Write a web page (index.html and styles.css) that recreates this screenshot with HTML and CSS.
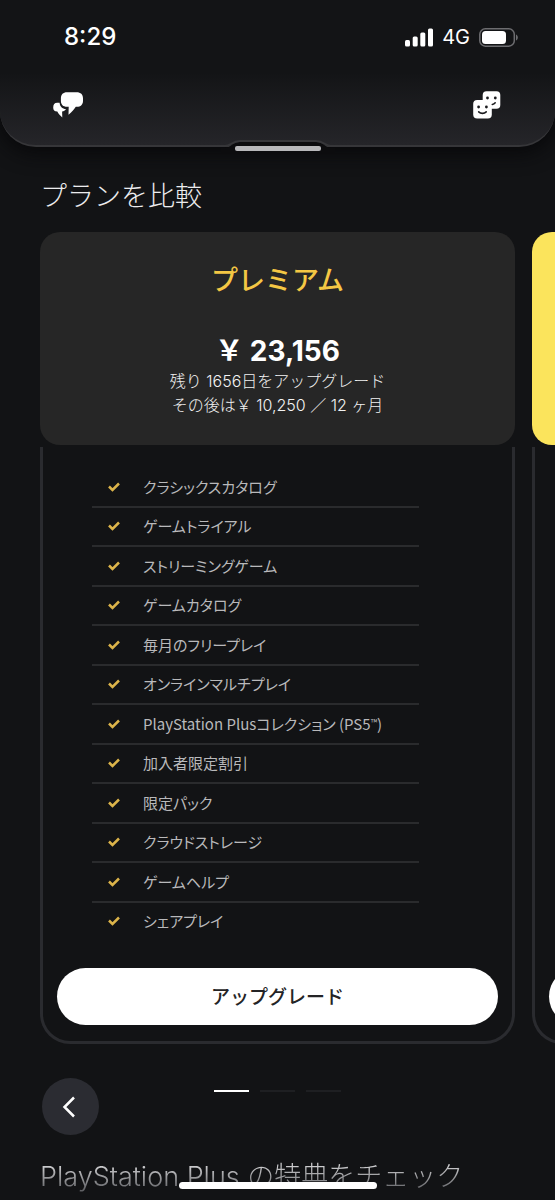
FILE: index.html
```html
<!DOCTYPE html>
<html lang="ja">
<head>
<meta charset="utf-8">
<meta name="viewport" content="width=device-width, initial-scale=1">
<title>PlayStation Plus</title>
<link rel="stylesheet" href="styles.css">
</head>
<body>
<div class="app">
  <header class="topbar">
    <div class="status">
      <time class="clock">8:29</time>
      <div class="status-right">
        <svg class="signal" width="28" height="19" viewBox="0 0 28 19" aria-hidden="true"><rect x="0" y="12" width="5" height="6.500" rx="1.500"/><rect x="7.700" y="8.500" width="5" height="10" rx="1.500"/><rect x="15.300" y="4.500" width="5" height="14" rx="1.500"/><rect x="23" y="0.500" width="5" height="18" rx="1.500"/></svg>
        <span class="network">4G</span>
        <svg width="39" height="19" viewBox="0 0 39 19" aria-hidden="true"><rect x="0.800" y="0.800" width="34.500" height="17.400" rx="5.500" fill="none" stroke="#6d6d70" stroke-width="1.500"/><rect x="3" y="3" width="24" height="13" rx="3.500" fill="#fff"/><path d="M37 6.500c2.400.8 2.400 5.200 0 6z" fill="#6d6d70"/></svg>
      </div>
    </div>
    <nav class="tools">
      <button class="icon-button" aria-label="メッセージ">
        <svg width="32" height="28" viewBox="0 0 32 28"><path fill="#fff" d="M16 1.200h9.500c4.300 0 6.500 2.200 6.500 6v2.500c0 3.900-2.200 6-6.200 6.100h-1c-1.800 2.800-4 5.200-7.300 7.900l.2-7.900h-1.700c-4 0-6.100-2.100-6.100-6V7.200c0-3.800 2.200-6 6.100-6z"/><path fill="#fff" d="M6.200 11.800h2.400c.2 3.600 2.600 6 6.500 6.400-1 1.300-2.400 2-4 2.200l.2 6c-2-1.500-3.800-3.400-5-5.800C3.400 20.500 2.200 19 2.200 16.500c0-3 1.300-4.700 4-4.700z"/></svg>
      </button>
      <button class="icon-button" aria-label="フレンド">
        <svg width="30" height="30" viewBox="0 0 30 30"><rect x="10.700" y="1.200" width="17.600" height="17.600" rx="3.800" fill="#fff"/><rect x="1.200" y="10" width="18.600" height="18.600" rx="4" fill="#fff"/><g fill="#1b1b1e"><circle cx="15.500" cy="8" r="1.400"/><circle cx="23.300" cy="8" r="1.400"/><circle cx="6.600" cy="17" r="1.400"/><circle cx="14.400" cy="17" r="1.400"/></g><path d="M20.300 14.500c1.300-.2 2.200-.8 2.900-1.700M6.700 21.900c2 2 5.500 2 7.500 0" fill="none" stroke="#1b1b1e" stroke-width="1.600" stroke-linecap="round"/></svg>
      </button>
    </nav>
    <svg class="notch" width="114" height="14" viewBox="0 0 114 14" aria-hidden="true"><path d="M0 9h4C10 9 11 3 19 3h76c8 0 9 6 15 6h4v5H0z" fill="#0c0c0e"/><path d="M0 7h4C10 7 11 2 19 2h76c8 0 9 5 15 5h4" fill="none" stroke="#363639" stroke-width="2"/><rect x="14" y="7" width="86" height="5" rx="2" fill="#b8b8ba"/></svg>
  </header>

  <main>
    <h2 class="title">プランを比較</h2>
    <div class="carousel">
      <article class="plan">
        <div class="plan-head">
          <h3 class="plan-name">プレミアム</h3>
          <p class="price">￥ 23,156</p>
          <p class="terms">残り 1656日をアップグレード<br>その後は￥ 10,250 ／ 12 ヶ月</p>
        </div>
        <div class="plan-body">
          <ul class="features">
            <li><svg class="check" viewBox="0 0 12 10"><path d="M1 4.500 4.500 8 11 1.500"/></svg>クラシックスカタログ</li>
            <li><svg class="check" viewBox="0 0 12 10"><path d="M1 4.500 4.500 8 11 1.500"/></svg>ゲームトライアル</li>
            <li><svg class="check" viewBox="0 0 12 10"><path d="M1 4.500 4.500 8 11 1.500"/></svg>ストリーミングゲーム</li>
            <li><svg class="check" viewBox="0 0 12 10"><path d="M1 4.500 4.500 8 11 1.500"/></svg>ゲームカタログ</li>
            <li><svg class="check" viewBox="0 0 12 10"><path d="M1 4.500 4.500 8 11 1.500"/></svg>毎月のフリープレイ</li>
            <li><svg class="check" viewBox="0 0 12 10"><path d="M1 4.500 4.500 8 11 1.500"/></svg>オンラインマルチプレイ</li>
            <li><svg class="check" viewBox="0 0 12 10"><path d="M1 4.500 4.500 8 11 1.500"/></svg><span>PlayStation Plusコレクション (PS5<small>™</small>)</span></li>
            <li><svg class="check" viewBox="0 0 12 10"><path d="M1 4.500 4.500 8 11 1.500"/></svg>加入者限定割引</li>
            <li><svg class="check" viewBox="0 0 12 10"><path d="M1 4.500 4.500 8 11 1.500"/></svg>限定パック</li>
            <li><svg class="check" viewBox="0 0 12 10"><path d="M1 4.500 4.500 8 11 1.500"/></svg>クラウドストレージ</li>
            <li><svg class="check" viewBox="0 0 12 10"><path d="M1 4.500 4.500 8 11 1.500"/></svg>ゲームヘルプ</li>
            <li><svg class="check" viewBox="0 0 12 10"><path d="M1 4.500 4.500 8 11 1.500"/></svg>シェアプレイ</li>
          </ul>
          <button class="upgrade">アップグレード</button>
        </div>
      </article>
      <article class="plan">
        <div class="plan-head plan-head-yellow"></div>
        <div class="plan-body"><button class="upgrade" aria-label="次のプラン"></button></div>
      </article>
    </div>
    <div class="controls">
      <button class="back" aria-label="戻る"><svg width="14" height="22" viewBox="0 0 14 22"><path d="M12 1.500 2.500 11l9.500 9.500" fill="none" stroke="#fff" stroke-width="2.500"/></svg></button>
      <div class="pages"><span class="page current"></span><span class="page"></span><span class="page"></span></div>
    </div>
    <h2 class="title next-title">PlayStation Plus の特典をチェック</h2>
  </main>
  <div class="home-indicator"></div>
</div>
</body>
</html>
```
FILE: styles.css
```css
* { box-sizing: border-box; }

body {
  margin: 0;
  background: #121315;
  color: #fff;
  font-family: Inter, "Noto Sans CJK JP", sans-serif;
}

h2, h3, p, ul { margin: 0; padding: 0; font-weight: 400; }

button {
  border: 0;
  padding: 0;
  font: inherit;
  cursor: pointer;
}

.app {
  position: relative;
  height: 100vh;
  overflow: hidden;
}

.topbar {
  position: relative;
  padding: 22px 37px 24px 51px;
  border-bottom: 2px solid #363639;
  border-radius: 0 0 36px 36px;
  background: linear-gradient(#131416 50%, #252529);
  box-shadow: 0 4px 20px 2px #08080a;
}

.status, .status-right, .tools { display: flex; align-items: center; }
.status, .tools { justify-content: space-between; }
.status { padding-left: 13px; height: 30px; }
.status-right { gap: 9px; }
.signal { fill: #fff; }
.clock { font-size: 24px; font-weight: 500; line-height: 30px; }
.network { font-size: 20px; line-height: 30px; }
.tools { margin-top: 36px; padding-right: 16px; }
.icon-button { display: flex; background: none; height: 33px; align-items: center; }

.notch {
  position: absolute;
  left: 50%;
  bottom: -8px;
  transform: translateX(-50%);
}

.title {
  padding: 0 40px;
  font-size: 27px;
  font-weight: 300;
  line-height: 40px;
  color: #ececee;
}

main > .title:first-child { margin-top: 30px; }

.carousel {
  display: flex;
  gap: 17px;
  margin-top: 15px;
  padding-left: 40px;
  overflow: hidden;
}

.plan {
  flex: 0 0 calc(100% - 40px);
  display: flex;
  flex-direction: column;
  gap: 2px;
}

.plan-head {
  min-height: 213px;
  padding: 29px 16px 24px;
  border-radius: 20px;
  background: #262626;
  text-align: center;
}

.plan-head-yellow { background: #fbe45c; }

.plan-name {
  font-size: 27px;
  font-weight: 500;
  line-height: 40px;
  color: #f4c744;
}

.price {
  margin-top: 32px;
  font-size: 28px;
  font-weight: 700;
  line-height: 36px;
}

.terms { font-size: 16px; line-height: 24px; color: #f2f2f2; font-weight: 300; }

.plan-body {
  flex: 1;
  display: flex;
  flex-direction: column;
  padding: 21px 14px 16px;
  border: 3px solid #2a2b2f;
  border-top: 0;
  border-radius: 0 0 30px 30px;
}

.features {
  display: grid;
  grid-auto-rows: 1fr;
  min-height: 474px;
  margin: 0 79px 26px 35px;
  list-style: none;
  font-family: "Noto Sans CJK JP", sans-serif;
  font-feature-settings: "palt";
  font-size: 15px;
  line-height: 22px;
  color: #b9b9bb;
}

.features li {
  display: flex;
  align-items: center;
  gap: 23px;
  padding-left: 16px;
  border-bottom: 2px solid #2a2b2d;
}

.features li:last-child { border-bottom-color: transparent; }
.features small { font-size: 9px; vertical-align: 4px; }

.check {
  width: 12px;
  height: 10px;
  fill: none;
  stroke: #dcb44a;
  stroke-width: 2.5;
}

.upgrade {
  width: 100%;
  min-height: 57px;
  margin-top: auto;
  padding-bottom: 2px;
  border-radius: 29px;
  background: #fff;
  color: #242426;
  font-size: 19px;
  font-weight: 500;
}

.controls {
  display: grid;
  grid-template-columns: 57px 1fr 57px;
  padding: 34px 42px 0;
}

.back {
  display: flex;
  align-items: center;
  justify-content: center;
  width: 57px;
  height: 57px;
  padding-right: 3px;
  border-radius: 50%;
  background: #2b2c32;
}

.pages {
  display: flex;
  justify-content: center;
  gap: 11px;
  padding-top: 12px;
}

.page { width: 35px; height: 2px; background: #1e1f22; }
.page.current { background: #fff; }

.next-title {
  margin-top: 22px;
  white-space: nowrap;
  background: linear-gradient(#d0d0d2 20%, #55565a 90%);
  background-clip: text;
  -webkit-background-clip: text;
  color: transparent;
}

.home-indicator {
  position: absolute;
  bottom: 11px;
  left: 50%;
  width: 198px;
  height: 7px;
  transform: translateX(-50%);
  border-radius: 4px;
  background: #fff;
}
```
